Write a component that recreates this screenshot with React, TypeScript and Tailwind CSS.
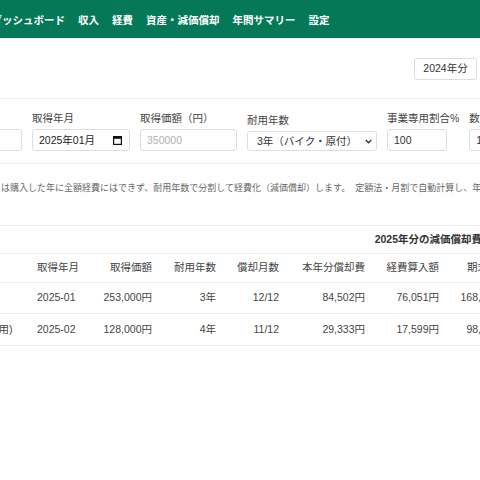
import React from "react";

const FONT = { fontFamily: '"Liberation Sans", "Noto Sans CJK JP", sans-serif' };

function CalendarIcon() {
  return (
    <svg width="9" height="9" viewBox="0 0 9 9" className="shrink-0">
      <rect x="0.6" y="0.6" width="7.8" height="7.8" fill="none" stroke="#111" strokeWidth="1.2" />
      <rect x="0.6" y="0.6" width="7.8" height="2.2" fill="#111" />
    </svg>
  );
}

function Chevron() {
  return (
    <svg width="7" height="5" viewBox="0 0 7 5" className="shrink-0">
      <path d="M0.8 1 L3.5 3.8 L6.2 1" fill="none" stroke="#333" strokeWidth="1.3" />
    </svg>
  );
}

const navItems = ["ダッシュボード", "収入", "経費", "資産・減価償却", "年間サマリー", "設定"];

type Row = {
  name: string;
  date: string;
  price: string;
  life: string;
  months: string;
  dep: string;
  exp: string;
  end: string;
};

const rows: Row[] = [
  { name: "原付バイク", date: "2025-01", price: "253,000円", life: "3年", months: "12/12", dep: "84,502円", exp: "76,051円", end: "168,498円" },
  { name: "ノートPC (事業用)", date: "2025-02", price: "128,000円", life: "4年", months: "11/12", dep: "29,333円", exp: "17,599円", end: "98,667円" },
];

export default function App() {
  return (
    <div className="w-[480px] h-[480px] overflow-hidden bg-white" style={FONT}>
      {/* Nav */}
      <div className="h-[38px] bg-[#047857] flex items-center gap-[13px] pt-[1px] whitespace-nowrap">
        {navItems.map((n, i) => (
          <span
            key={n}
            className={`text-white font-bold text-[10.5px] leading-[14px] shrink-0 ${i === 0 ? "-ml-[8.5px]" : ""}`}
          >
            {n}
          </span>
        ))}
      </div>

      {/* Year selector row */}
      <div className="h-[60px] flex justify-end pt-[20px] pr-[3px]">
        <div className="h-[22px] w-[63px] border border-[#dddddd] rounded-[3px] flex items-center justify-center text-[10.5px] text-[#333] bg-white">
          2024年分
        </div>
      </div>

      {/* Form card */}
      <div className="border-t border-b border-[#eeeeee] pt-[12px] pb-[12px] overflow-hidden">
        <div className="flex items-end gap-[10px] -ml-[76px] whitespace-nowrap text-[10.5px] leading-[14px]">
          <div className="w-[98px] shrink-0 flex flex-col gap-[4px]">
            <span className="text-[#444]">資産名</span>
            <div className="h-[22px] border border-[#dddddd] rounded-[3px] bg-white flex items-center pl-[6px] text-[#333]">原付バイク</div>
          </div>
          <div className="w-[98px] shrink-0 flex flex-col gap-[4px]">
            <span className="text-[#444]">取得年月</span>
            <div className="h-[22px] border border-[#dddddd] rounded-[3px] bg-white flex items-center justify-between pl-[6px] pr-[7px] text-[#222]">
              <span>2025年01月</span>
              <CalendarIcon />
            </div>
          </div>
          <div className="w-[97px] shrink-0 flex flex-col gap-[4px]">
            <span className="text-[#444]">取得価額（円）</span>
            <div className="h-[22px] border border-[#dddddd] rounded-[3px] bg-white flex items-center pl-[6px] text-[#b0b0b0]">350000</div>
          </div>
          <div className="w-[130px] shrink-0 flex flex-col gap-[4px]">
            <span className="text-[#444]">耐用年数</span>
            <div className="h-[20px] border border-[#dddddd] rounded-[3px] bg-white flex items-center justify-between pl-[9px] pr-[4px] text-[#333]">
              <span>3年（バイク・原付）</span>
              <Chevron />
            </div>
          </div>
          <div className="shrink-0 flex flex-col gap-[4px]">
            <span className="text-[#444]">事業専用割合%</span>
            <div className="w-[60px] h-[22px] border border-[#dddddd] rounded-[3px] bg-white flex items-center pl-[6px] text-[#333]">100</div>
          </div>
          <div className="shrink-0 flex flex-col gap-[4px]">
            <span className="text-[#444]">数量</span>
            <div className="w-[60px] h-[22px] border border-[#dddddd] rounded-[3px] bg-white flex items-center pl-[6px] text-[#333]">1</div>
          </div>
        </div>
      </div>

      {/* Description */}
      <div className="h-[61px] pt-[17px] overflow-hidden">
        <p className="text-[9px] leading-[14px] text-[#666] whitespace-nowrap pl-[1px]">
          は購入した年に全額経費にはできず、耐用年数で分割して経費化（減価償却）します。&nbsp;&nbsp;定額法・月割で自動計算し、年度ごとの償却費を経費に計上します。
        </p>
      </div>

      {/* Table card */}
      <div className="border-t border-[#eeeeee] overflow-hidden">
        <div className="h-[28px] border-b border-[#eeeeee] flex items-center justify-end w-[494px] pr-[12px] whitespace-nowrap">
          <span className="font-bold text-[10.5px] text-[#333]">2025年分の減価償却費</span>
        </div>
        <div className="-ml-[87px] w-[700px] text-[10.5px] whitespace-nowrap">
          <div className="h-[29px] border-b border-[#eeeeee] flex items-center text-[#444]">
            <div className="w-[112px] shrink-0 pl-[12px]">資産名</div>
            <div className="w-[60px] shrink-0 pl-[12px]">取得年月</div>
            <div className="w-[79px] shrink-0 pr-[12px] text-right">取得価額</div>
            <div className="w-[64px] shrink-0 pr-[12px] text-right">耐用年数</div>
            <div className="w-[63px] shrink-0 pr-[12px] text-right">償却月数</div>
            <div className="w-[86px] shrink-0 pr-[12px] text-right">本年分償却費</div>
            <div className="w-[74px] shrink-0 pr-[12px] text-right">経費算入額</div>
            <div className="w-[70px] shrink-0 pr-[12px] text-right">期末簿価</div>
            <div className="w-[60px] shrink-0 pl-[12px]">操作</div>
          </div>
          {rows.map((r, i) => (
            <div
              key={r.date}
              className={`${i === 0 ? "h-[31px]" : "h-[32px]"} border-b border-[#eeeeee] flex items-center text-[#444]`}
            >
              <div className="w-[112px] shrink-0 pl-[12px]">{r.name}</div>
              <div className="w-[60px] shrink-0 pl-[12px]">{r.date}</div>
              <div className="w-[79px] shrink-0 pr-[12px] text-right">{r.price}</div>
              <div className="w-[64px] shrink-0 pr-[12px] text-right">{r.life}</div>
              <div className="w-[63px] shrink-0 pr-[12px] text-right">{r.months}</div>
              <div className="w-[86px] shrink-0 pr-[12px] text-right">{r.dep}</div>
              <div className="w-[74px] shrink-0 pr-[12px] text-right">{r.exp}</div>
              <div className="w-[70px] shrink-0 pr-[12px] text-right">{r.end}</div>
              <div className="w-[60px] shrink-0 pl-[12px]">削除</div>
            </div>
          ))}
        </div>
      </div>
    </div>
  );
}
